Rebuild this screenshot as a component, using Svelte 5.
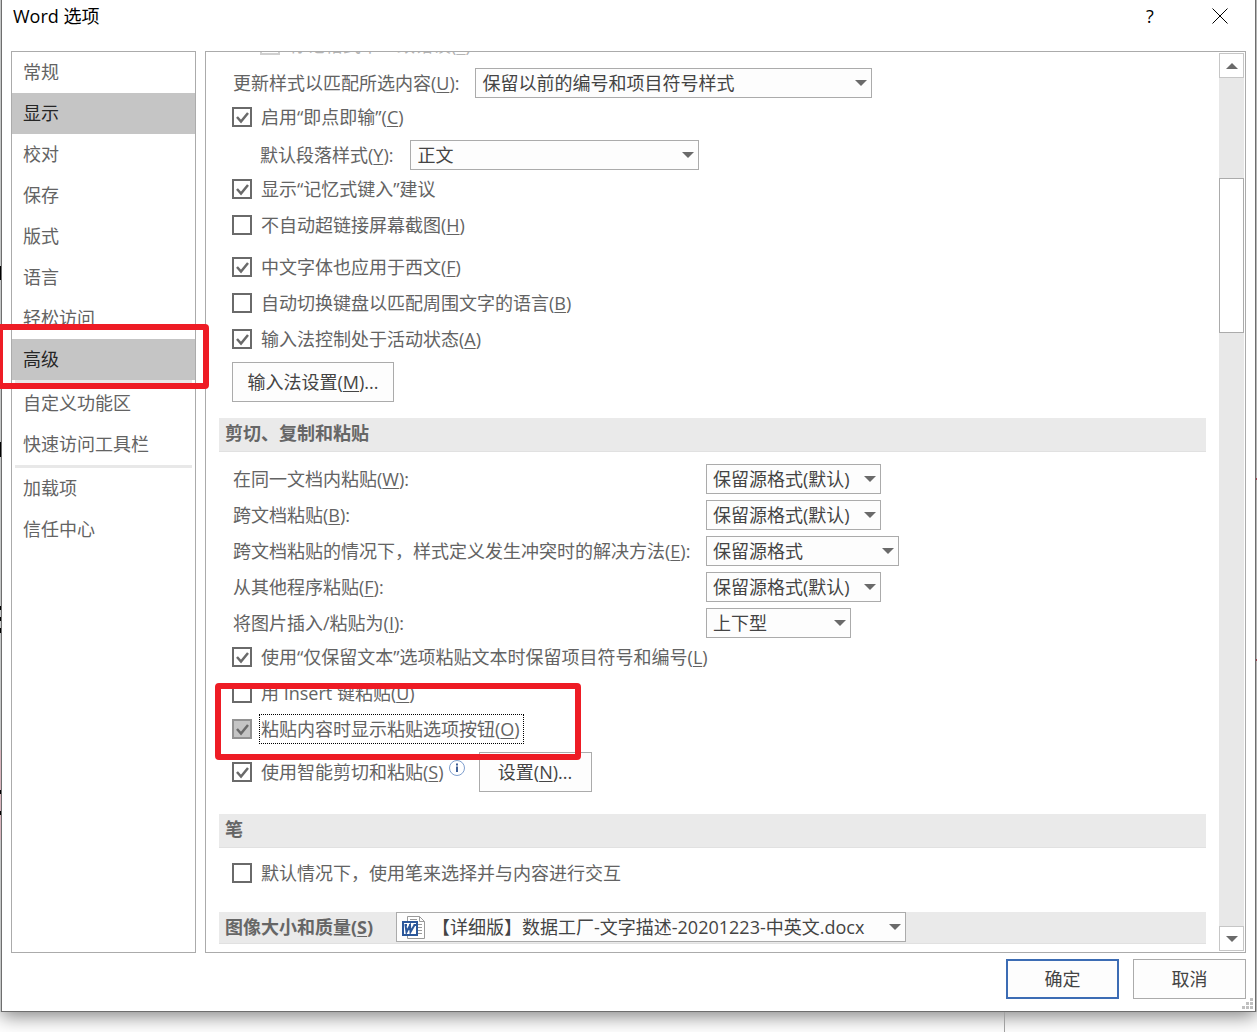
<script lang="ts">
  type Label = { text: string; key?: string; tail?: string };

  const nav = [
    { text: '常规' },
    { text: '显示', active: true },
    { text: '校对' },
    { text: '保存' },
    { text: '版式' },
    { text: '语言' },
    { text: '轻松访问' },
    { text: '高级', active: true, marked: true, divider: true },
    { text: '自定义功能区' },
    { text: '快速访问工具栏', divider: true },
    { text: '加载项' },
    { text: '信任中心' },
  ];

  const inputChecks = [
    { id: 'autolink', text: '不自动超链接屏幕截图', key: 'H', checked: false, space: '' },
    { id: 'latin', text: '中文字体也应用于西文', key: 'F', checked: true, space: 'wide' },
    { id: 'keyboard', text: '自动切换键盘以匹配周围文字的语言', key: 'B', checked: false, space: '' },
    { id: 'ime', text: '输入法控制处于活动状态', key: 'A', checked: true, space: '' },
  ];

  const pasteRows = [
    { id: 'same', text: '在同一文档内粘贴', key: 'W', value: '保留源格式(默认)', size: 'md' },
    { id: 'cross', text: '跨文档粘贴', key: 'B', value: '保留源格式(默认)', size: 'md' },
    { id: 'conflict', text: '跨文档粘贴的情况下，样式定义发生冲突时的解决方法', key: 'E', value: '保留源格式', size: 'lg' },
    { id: 'other', text: '从其他程序粘贴', key: 'F', value: '保留源格式(默认)', size: 'md' },
    { id: 'picture', text: '将图片插入/粘贴为', key: 'I', value: '上下型', size: 'sm' },
  ];
</script>

{#snippet caption(l: Label)}{l.text}{#if l.key}(<u>{l.key}</u>){/if}{l.tail ?? ''}{/snippet}

{#snippet check(id: string, l: Label, checked: boolean, extra: string)}
  <input type="checkbox" {id} {checked} class={extra} />
  <label for={id} class={extra}>{@render caption(l)}</label>
{/snippet}

{#snippet combo(id: string, value: string, size: string)}
  <span class="combo {size}">
    <select {id}><option>{value}</option></select>
    <svg class="arrow" viewBox="0 0 12 6" aria-hidden="true"><path d="M0 0h12L6 6z" /></svg>
  </span>
{/snippet}

<div class="desktop">
  <div class="dialog" role="dialog" aria-labelledby="title">
    <header class="titlebar">
      <h1 id="title">Word 选项</h1>
      <button class="caption-btn" aria-label="帮助">?</button>
      <button class="caption-btn" aria-label="关闭">
        <svg width="16" height="16" viewBox="0 0 16 16"><path d="M.5.5l15 15M15.500.5l-15 15" /></svg>
      </button>
    </header>

    <div class="body">
      <nav>
        {#each nav as item}
          <button class="nav-item" class:active={item.active}>
            {item.text}
            {#if item.marked}<span class="marker nav-marker"></span>{/if}
          </button>
          {#if item.divider}<div class="divider"></div>{/if}
        {/each}
      </nav>

      <main>
        <div class="options">
          <div class="row indent clipped">
            {@render check('track', { text: '标记格式不一致错误', key: 'F' }, false, 'off')}
          </div>
          <div class="row loose">
            <label class="lead" for="style">{@render caption({ text: '更新样式以匹配所选内容', key: 'U', tail: ':' })}</label>
            {@render combo('style', '保留以前的编号和项目符号样式', 'xl')}
          </div>
          <div class="row tight">
            {@render check('click', { text: '启用“即点即输”', key: 'C' }, true, '')}
          </div>
          <div class="row indent loose">
            <label class="lead" for="para">{@render caption({ text: '默认段落样式', key: 'Y', tail: ':' })}</label>
            {@render combo('para', '正文', 'para')}
          </div>
          <div class="row tight">
            {@render check('auto', { text: '显示“记忆式键入”建议' }, true, '')}
          </div>
          {#each inputChecks as c}
            <div class="row {c.space}">{@render check(c.id, c, c.checked, '')}</div>
          {/each}
          <div class="row loose">
            <button class="push ime">输入法设置(<u>M</u>)...</button>
          </div>

          <h2>剪切、复制和粘贴</h2>
          {#each pasteRows as r, i}
            <div class="row" class:wide={i === 0}>
              <label class="lead column" for={r.id}>{@render caption({ ...r, tail: ':' })}</label>
              {@render combo(r.id, r.value, r.size)}
            </div>
          {/each}
          <div class="row tight">
            {@render check('keep', { text: '使用“仅保留文本”选项粘贴文本时保留项目符号和编号', key: 'L' }, true, '')}
          </div>
          <div class="row">
            {@render check('insert', { text: '用 Insert 键粘贴', key: 'U' }, false, '')}
          </div>
          <div class="row">
            {@render check('buttons', { text: '粘贴内容时显示粘贴选项按钮', key: 'O' }, true, 'focused')}
            <span class="marker row-marker"></span>
          </div>
          <div class="row loose">
            {@render check('smart', { text: '使用智能剪切和粘贴', key: 'S' }, true, '')}
            <svg class="info" viewBox="0 0 18 18" aria-hidden="true">
              <circle cx="9" cy="9" r="7.5" />
              <path d="M9 7.500v5.500M9 4.500v2" />
            </svg>
            <button class="push">设置(<u>N</u>)...</button>
          </div>

          <h2 class="pen">笔</h2>
          <div class="row pen-row">
            {@render check('pen', { text: '默认情况下，使用笔来选择并与内容进行交互' }, false, '')}
          </div>

          <div class="image-head">
            <h2><label for="doc">图像大小和质量(<u>S</u>)</label></h2>
            <span class="combo doc">
              <svg class="word" viewBox="0 0 24 23" aria-hidden="true">
                <path class="page" d="M5.500 5V.5h12l5 5v17h-17V18M17.500.5v5h5" />
                <path class="lines" d="M8 3.500h7M16 8.500h4M16 11.500h4M16 14.500h4M16 17.500h4" />
                <path class="tile" d="M1 6h14v13H1z" />
                <path class="mark" d="M3.500 9l1 7 3.500-6.500.5 6.500L12.500 9M2.500 9H5M7 9h2M11.500 9H14" />
              </svg>
              <select id="doc"><option>【详细版】数据工厂-文字描述-20201223-中英文.docx</option></select>
              <svg class="arrow" viewBox="0 0 12 6" aria-hidden="true"><path d="M0 0h12L6 6z" /></svg>
            </span>
          </div>
        </div>

        <div class="scrollbar">
          <button aria-label="向上滚动"><svg viewBox="0 0 12 6"><path d="M0 6h12L6 0z" /></svg></button>
          <div class="track-top"></div>
          <div class="thumb"></div>
          <div class="track-bottom"></div>
          <button aria-label="向下滚动"><svg viewBox="0 0 12 6"><path d="M0 0h12L6 6z" /></svg></button>
        </div>
      </main>
    </div>

    <footer>
      <button class="push primary">确定</button>
      <button class="push">取消</button>
      <svg class="grip" width="11" height="11" viewBox="0 0 11 11" aria-hidden="true">
        <path d="M8 0h3v3H8zM4 4h3v3H4zM8 4h3v3H8zM0 8h3v3H0zM4 8h3v3H4zM8 8h3v3H8z" />
      </svg>
    </footer>
  </div>
  <div class="page-edge"></div>
</div>

<style>
  :global(body) {
    margin: 0;
    background: #fff;
  }
  * {
    box-sizing: border-box;
  }
  .desktop {
    position: relative;
    display: flex;
    flex-direction: column;
    min-height: 100vh;
    padding: 0 1px;
    overflow: hidden;
    font-family: 'Open Sans', 'Noto Sans CJK SC', sans-serif;
    font-size: 18px;
    line-height: 24px;
    color: #636363;
  }
  /* slivers of the document behind the dialog */
  .desktop::before,
  .desktop::after {
    content: '';
    position: absolute;
    top: 0;
    bottom: 20px;
    left: 0;
    width: 1px;
    background: linear-gradient(
      #c4c6c6 266px,
      #000 266px 280px,
      #c4c6c6 280px 442px,
      #000 442px 457px,
      #c4c6c6 457px 606px,
      #000 606px 610px,
      #c4c6c6 610px 617px,
      #000 617px 621px,
      #c4c6c6 621px 628px,
      #000 628px 633px,
      #c4c6c6 633px 750px,
      #d8b4bc 750px 790px,
      #000 790px 794px,
      #d8b4bc 794px 811px,
      #000 811px 815px,
      #d8b4bc 815px 840px,
      #c4c6c6 840px
    );
  }
  .desktop::after {
    left: auto;
    right: 0;
    background: linear-gradient(#b5b5b5 478px, #a04050 478px 480px, #b5b5b5 480px 659px, #a04050 659px 661px, #b5b5b5 661px);
  }
  button,
  select {
    font: inherit;
    color: #444;
  }
  u {
    text-underline-offset: 2px;
    text-decoration-thickness: 1px;
  }
  .dialog {
    flex: 1;
    display: flex;
    flex-direction: column;
    background: #fff;
    border: 1px solid #6e6e6e;
    border-top: 0;
    box-shadow: 0 4px 18px rgba(0, 0, 0, 0.5);
  }

  /* title bar */
  .titlebar {
    display: flex;
    align-items: flex-start;
    height: 51px;
    padding: 0 0 0 11px;
    color: #000;
  }
  h1 {
    flex: 1;
    margin: 4px 0 0;
    font-size: 18px;
    font-weight: 400;
  }
  .caption-btn {
    display: flex;
    align-items: center;
    justify-content: center;
    width: 70px;
    height: 32px;
    padding: 0;
    border: 0;
    background: none;
    color: #000;
  }
  .caption-btn path {
    stroke: #000;
    fill: none;
  }

  .body {
    flex: 1;
    display: flex;
    gap: 9px;
    padding: 0 9px;
  }

  /* category list */
  nav {
    flex: none;
    width: 185px;
    border: 1px solid #ababab;
  }
  .nav-item {
    position: relative;
    display: block;
    width: 100%;
    height: 41px;
    padding: 0 11px 2px;
    border: 0;
    background: none;
    color: #636363;
    text-align: left;
  }
  .nav-item.active {
    background: #c5c5c5;
    color: #262626;
  }
  .divider {
    height: 3px;
    margin: 0 3px;
    background: #e8e8e8;
  }

  /* hand-drawn red frames */
  .marker {
    position: absolute;
    z-index: 2;
    border: 6px solid #ee1c25;
    border-radius: 4px;
    pointer-events: none;
  }
  .nav-marker {
    inset: -15px -14px -9px -15px;
  }
  .row-marker {
    top: -31px;
    left: -4px;
    width: 366px;
    height: 77px;
  }

  /* options pane */
  main {
    flex: 1;
    display: flex;
    min-width: 0;
    padding: 0 1px 0 13px;
    border: 1px solid #ababab;
    overflow: hidden;
  }
  .options {
    flex: 1;
    min-width: 0;
    margin-right: 13px;
  }
  .row {
    position: relative;
    display: flex;
    align-items: center;
    min-height: 30px;
    margin-top: 6px;
    padding-left: 13px;
    white-space: nowrap;
  }
  .row.tight {
    margin-top: 4px;
  }
  .row.loose {
    margin-top: 8px;
  }
  .row.wide {
    margin-top: 12px;
  }
  .row.indent {
    padding-left: 41px;
  }
  .row.clipped {
    margin-top: -22px;
  }
  .lead {
    margin: 0 16px 0 1px;
  }
  .row.indent .lead {
    margin-left: 0;
    margin-right: 17px;
  }
  .row .column {
    width: 473px;
    margin-right: 0;
  }
  input[type='checkbox'] {
    appearance: none;
    flex: none;
    width: 20px;
    height: 20px;
    margin: 0 9px 0 0;
    border: 2px solid #6a6a6a;
    background-color: #fff;
    background-origin: border-box;
  }
  input[type='checkbox']:checked {
    background-image: url("data:image/svg+xml,%3Csvg xmlns='http://www.w3.org/2000/svg' width='20' height='20'%3E%3Cpath d='M5 10l4 4.500L16 6' fill='none' stroke='%236a6a6a' stroke-width='2.500'/%3E%3C/svg%3E");
  }
  input[type='checkbox'].off {
    border-color: #cfcfcf;
  }
  label.off {
    color: #b5b5b5;
  }
  input[type='checkbox'].focused {
    margin-right: 7px;
    border-color: #929292;
    background-color: #c5c5c5;
  }
  label.focused {
    height: 30px;
    padding: 2px 3px 2px 1px;
    border: 1px dotted #000;
  }

  /* drop-downs */
  .combo {
    position: relative;
    flex: none;
    display: flex;
    align-items: center;
    height: 30px;
    border: 1px solid #ababab;
    background: #fdfdfd;
  }
  select {
    appearance: none;
    flex: 1;
    min-width: 0;
    height: 28px;
    padding: 0 0 0 6px;
    border: 0;
    background: none;
  }
  .arrow {
    position: absolute;
    right: 4px;
    width: 12px;
    height: 6px;
    pointer-events: none;
  }
  .arrow path,
  .scrollbar path {
    fill: #6a6a6a;
  }
  .xl {
    width: 397px;
  }
  .para {
    width: 289px;
  }
  .lg {
    width: 193px;
  }
  .md {
    width: 175px;
  }
  .sm {
    width: 145px;
  }
  .doc {
    width: 510px;
    padding-left: 5px;
  }

  .push {
    width: 113px;
    height: 40px;
    padding: 0;
    border: 1px solid #ababab;
    background: #fdfdfd;
  }
  .push.ime {
    width: 162px;
  }
  .push.primary {
    border: 2px solid #3c6cb4;
  }
  .info {
    width: 18px;
    height: 18px;
    margin: 0 13px 8px 4px;
    fill: none;
    stroke: #7f9fce;
  }
  .info path {
    stroke: #3f5f96;
    stroke-width: 2;
  }

  h2 {
    height: 34px;
    margin: 16px 0 0;
    padding: 3px 6px;
    border-bottom: 1px solid #e1e1e1;
    background: #eaeaea;
    color: #666;
    font-size: 18px;
    font-weight: 700;
  }
  h2.pen {
    margin-top: 22px;
  }
  .pen-row {
    margin-top: 10px;
  }
  .image-head {
    display: flex;
    height: 32px;
    margin-top: 24px;
    border-bottom: 1px solid #e1e1e1;
    background: #eaeaea;
  }
  .image-head h2 {
    flex: none;
    width: 177px;
    height: 31px;
    margin: 0;
    border: 0;
  }
  .word {
    flex: none;
    width: 24px;
    height: 23px;
    fill: #fff;
    stroke: #9a9a9a;
  }
  .word .tile {
    stroke: #2b579a;
    stroke-width: 2;
  }
  .word .mark {
    fill: none;
    stroke: #2b579a;
    stroke-width: 2;
  }

  /* scroll bar */
  .scrollbar {
    flex: none;
    display: flex;
    flex-direction: column;
    width: 25px;
    margin: 1px 0;
    background: #e8e8e8;
  }
  .scrollbar button {
    flex: none;
    display: flex;
    align-items: center;
    justify-content: center;
    height: 25px;
    padding: 0;
    border: 1px solid #c6c6c6;
    background: #fff;
  }
  .scrollbar svg {
    width: 12px;
    height: 6px;
  }
  .track-top {
    flex: 100;
  }
  .thumb {
    flex: 153;
    border: 1px solid #ababab;
    background: #fff;
  }
  .track-bottom {
    flex: 593;
  }

  footer {
    position: relative;
    display: flex;
    justify-content: flex-end;
    gap: 14px;
    padding: 6px 9px 12px;
  }
  .grip {
    position: absolute;
    right: 2px;
    bottom: 2px;
    fill: #c0c0c0;
  }
  .page-edge {
    width: 80%;
    height: 20px;
    border-right: 1px solid #a0a0a0;
  }
</style>
